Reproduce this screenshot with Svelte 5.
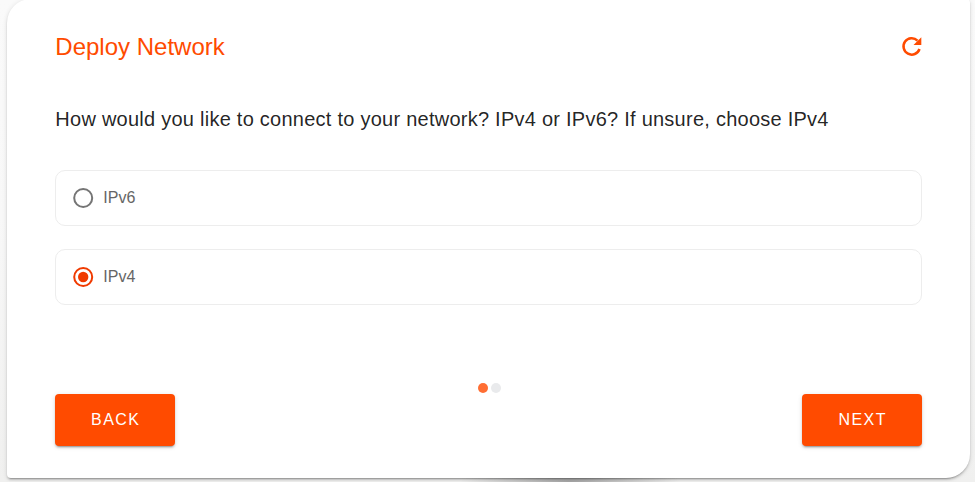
<script>
  const options = ['IPv6', 'IPv4'];
  let selected = $state('IPv4');
</script>

<div class="page">
  <main class="card">
    <header>
      <h1>Deploy Network</h1>
      <button class="refresh" aria-label="Refresh">
        <svg viewBox="0 0 28 28" width="28" height="28">
          <path class="arc" d="M21.5 16A8.2 8.2 0 1 1 19.5 7.6" />
          <path class="head" d="M23.3 4.2V12H15.5Z" />
        </svg>
      </button>
    </header>

    <p class="question">How would you like to connect to your network? IPv4 or IPv6? If unsure, choose IPv4</p>

    <div class="options" role="radiogroup">
      {#each options as option}
        <button class="option" role="radio" aria-checked={selected === option} onclick={() => (selected = option)}>
          <svg class:on={selected === option} viewBox="0 0 24 24" width="24" height="24">
            <circle class="ring" cx="12.2" cy="12" r="9" />
            {#if selected === option}<circle class="dot" cx="12.2" cy="12" r="5.2" />{/if}
          </svg>
          <span>{option}</span>
        </button>
      {/each}
    </div>

    <div class="steps"><i class="active"></i><i></i></div>

    <footer>
      <button class="action">BACK</button>
      <button class="action">NEXT</button>
    </footer>
  </main>
</div>

<style>
  :global(body) { margin: 0; }
  .page {
    box-sizing: border-box;
    height: 482px;
    padding: 0 5px 0 7px;
    overflow: hidden;
    font-family: "Liberation Sans", Arial, sans-serif;
    background:
      radial-gradient(ellipse 110px 20px at 570px 482px, #a4a4a4, transparent),
      linear-gradient(#fafafa 0, #f8f8f8 45%, #f0f0ef 100%);
  }
  .card {
    box-sizing: border-box;
    height: 479px;
    margin-top: -1px;
    padding: 33px 48px 0;
    display: flex;
    flex-direction: column;
    background: #fff;
    border-radius: 24px 4px 24px 4px;
    box-shadow: 0 3px 1px -2px rgba(0, 0, 0, .2), 0 2px 2px rgba(0, 0, 0, .14), 0 1px 5px rgba(0, 0, 0, .12);
  }
  button { font: inherit; border: 0; margin: 0; padding: 0; background: none; cursor: pointer; }
  svg { display: block; }
  header { display: flex; justify-content: space-between; align-items: center; height: 30px; }
  h1 { margin: 0; padding-left: .35px; font-size: 24px; font-weight: 400; line-height: 30px; color: #ff4b00; }
  .refresh { margin-right: -4px; }
  .arc { fill: none; stroke: #ff4b00; stroke-width: 2.5; }
  .head { fill: #ff4b00; }
  .question {
    margin: 41px 0 0;
    padding-left: .35px;
    height: 32px;
    font-size: 20px;
    line-height: 32px;
    letter-spacing: .25px;
    white-space: nowrap;
    color: rgba(0, 0, 0, .87);
  }
  .options { display: grid; gap: 23px; margin-top: 35px; }
  .option {
    box-sizing: border-box;
    height: 56px;
    display: flex;
    align-items: center;
    gap: 8.35px;
    padding: 0 15px;
    border: 1px solid #ededed;
    border-radius: 10px;
    font-size: 16px;
    color: #666;
  }
  .ring { fill: none; stroke: #757575; stroke-width: 2; }
  .on .ring { stroke: #f03a00; }
  .dot { fill: #f03a00; }
  .steps { display: flex; justify-content: center; gap: 3px; margin-top: 78px; padding-left: 1px; height: 10px; }
  .steps i { width: 10px; height: 10px; border-radius: 50%; background: #e9eaec; }
  .steps .active { background: #ff6e33; }
  footer { display: flex; justify-content: space-between; margin-top: 1px; }
  .action {
    width: 120px;
    height: 52px;
    padding-left: 1.4px;
    border-radius: 4px;
    background: #ff4b00;
    color: #fff;
    font-size: 16px;
    letter-spacing: 1.43px;
    box-shadow: 0 3px 1px -2px rgba(0, 0, 0, .2), 0 2px 2px rgba(0, 0, 0, .14), 0 1px 5px rgba(0, 0, 0, .12);
  }
</style>
